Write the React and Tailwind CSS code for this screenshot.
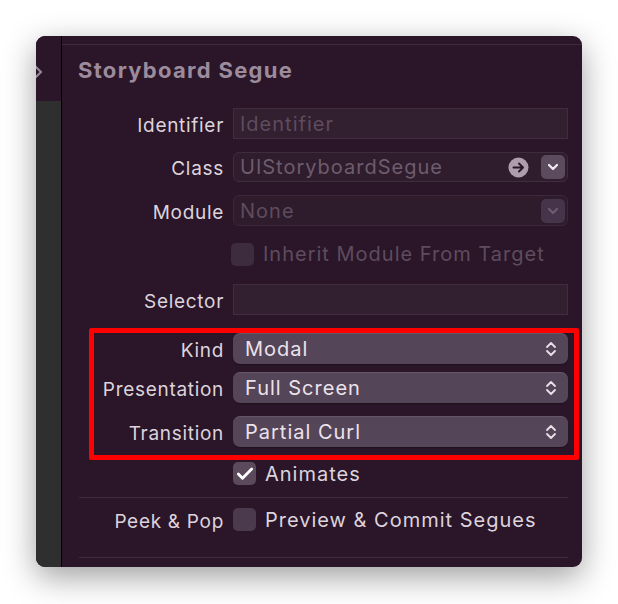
import { Check } from 'lucide-react'

const font = { fontFamily: 'Inter, "Noto Sans", sans-serif' }

function Row({ label, children, className = '' }) {
  return (
    <div className={`flex items-center ${className}`}>
      <span className="w-[162px] shrink-0 translate-y-[2px] whitespace-nowrap text-right text-[19px] leading-[22px] tracking-[0.7px] text-[#ddd3dd]">{label}</span>
      <div className="ml-[9px] w-[335px] shrink-0">{children}</div>
    </div>
  )
}

function UpDown() {
  return (
    <svg width="12" height="16" viewBox="0 0 12 16" fill="none" stroke="#e9e0e9" strokeWidth="1.8" strokeLinecap="round" strokeLinejoin="round">
      <path d="M2 6 L6 2 L10 6" />
      <path d="M2 10 L6 14 L10 10" />
    </svg>
  )
}

function Popup({ value }) {
  return (
    <div className="flex h-[31px] items-center justify-between rounded-[7px] border-t border-[#65566a] bg-[#554558] pl-[12px] pr-[11px] shadow-[0_1px_1px_rgba(0,0,0,0.3)]">
      <span className="text-[20px] tracking-[1px] text-[#ebe2eb]">{value}</span>
      <UpDown />
    </div>
  )
}

function DropButton({ disabled }) {
  return (
    <div className={`flex h-[24px] w-[24px] items-center justify-center rounded-[5px] ${disabled ? 'bg-[#45344a]' : 'bg-[#5c4b5e]'}`}>
      <svg width="12" height="8" viewBox="0 0 12 8" fill="none" stroke={disabled ? '#6e5d70' : '#f2ecf2'} strokeWidth="2.2" strokeLinecap="round" strokeLinejoin="round">
        <path d="M2 2 L6 6 L10 2" />
      </svg>
    </div>
  )
}

function Box({ checked, disabled }) {
  return (
    <div
      className={`flex h-[23px] w-[23px] shrink-0 items-center justify-center rounded-[5px] ${
        checked ? 'bg-[#5a4a5c]' : disabled ? 'bg-[#3d2c3e]' : 'bg-[#4b3a4d]'
      }`}
    >
      {checked ? <Check className="h-[20px] w-[20px] text-white" strokeWidth={3.4} /> : null}
    </div>
  )
}

export default function App() {
  return (
    <div className="min-h-[604px] w-[618px] bg-white pl-[36px] pt-[36px]" style={font}>
      <div className="flex h-[531px] w-[546px] overflow-hidden rounded-[9px] bg-[#2a1628] shadow-[0_10px_32px_rgba(0,0,0,0.38)]">
        <div className="flex w-[26px] shrink-0 flex-col border-r border-black">
          <div className="flex h-[65px] items-start bg-[#2a1628] pt-[28px]">
            <svg width="10" height="16" viewBox="0 0 10 16" fill="none" stroke="#9a8a9a" strokeWidth="2" className="-ml-[3px]">
              <path d="M2 2 L8 8 L2 14" />
            </svg>
          </div>
          <div className="flex-1 bg-[#2f2f2f]" />
        </div>

        <div className="flex-1">
          <div className="mt-[8px] h-px bg-[#3d2b3c]" />
          <h2 className="ml-[16px] mt-[11px] h-[28px] whitespace-nowrap text-[22px] font-bold leading-[28px] tracking-[1.3px] text-[#9c8b9c]">Storyboard Segue</h2>

          <Row label="Identifier" className="mt-[24px]">
            <div className="flex h-[31px] items-center border border-[#3f2c3f] bg-[#321f30] px-[6px]">
              <span className="text-[20px] tracking-[1px] text-[#5e4c5e]">Identifier</span>
            </div>
          </Row>

          <Row label="Class" className="mt-[13px]">
            <div className="flex h-[30px] items-center justify-between rounded-[6px] border border-[#3f2d3f] bg-[#2f1c2d] pl-[6px] pr-[2px]">
              <span className="text-[20px] tracking-[1px] text-[#6d5c6d]">UIStoryboardSegue</span>
              <div className="flex items-center gap-[12px]">
                <svg width="21" height="21" viewBox="0 0 21 21">
                  <circle cx="10.5" cy="10.5" r="10" fill="#ad9dad" />
                  <path d="M5.5 10.5 H15 M11 6.5 L15 10.5 L11 14.5" fill="none" stroke="#2a1628" strokeWidth="2" strokeLinecap="round" strokeLinejoin="round" />
                </svg>
                <DropButton />
              </div>
            </div>
          </Row>

          <Row label="Module" className="mt-[13px]">
            <div className="flex h-[31px] items-center justify-between rounded-[6px] border border-[#3a283a] bg-[#2e1b2c] pl-[6px] pr-[2px]">
              <span className="text-[20px] tracking-[1px] text-[#5e4c5e]">None</span>
              <DropButton disabled />
            </div>
          </Row>

          <Row label="" className="mt-[16px]">
            <div className="-ml-[2px] flex h-[24px] items-center gap-[9px]">
              <Box disabled />
              <span className="whitespace-nowrap text-[20px] tracking-[1px] text-[#5e4c5e]">Inherit Module From Target</span>
            </div>
          </Row>

          <Row label="Selector" className="mt-[18px]">
            <div className="h-[31px] border border-[#3f2c3f] bg-[#321f30]" />
          </Row>

          <div className="relative mt-[18px]">
            <Row label="Kind">
              <Popup value="Modal" />
            </Row>
            <Row label="Presentation" className="mt-[8px]">
              <Popup value="Full Screen" />
            </Row>
            <Row label="Transition" className="mt-[13px]">
              <Popup value="Partial Curl" />
            </Row>
            <div className="pointer-events-none absolute -bottom-[13px] -top-[5px] left-[27px] right-[3px] rounded-[2px] border-[5px] border-[#ff0000]" />
          </div>

          <Row label="" className="mt-[15px]">
            <div className="flex h-[23px] items-center gap-[9px]">
              <Box checked />
              <span className="text-[20px] tracking-[1px] text-[#ddd3dd]">Animates</span>
            </div>
          </Row>

          <div className="ml-[17px] mr-[14px] mt-[12px] h-px bg-[#3d2b3c]" />

          <Row label="Peek & Pop" className="mt-[10px]">
            <div className="flex h-[23px] items-center gap-[9px]">
              <Box />
              <span className="whitespace-nowrap text-[20px] tracking-[1px] text-[#ddd3dd]">Preview &amp; Commit Segues</span>
            </div>
          </Row>

          <div className="ml-[17px] mr-[14px] mt-[26px] h-px bg-[#3d2b3c]" />
        </div>
      </div>
    </div>
  )
}
